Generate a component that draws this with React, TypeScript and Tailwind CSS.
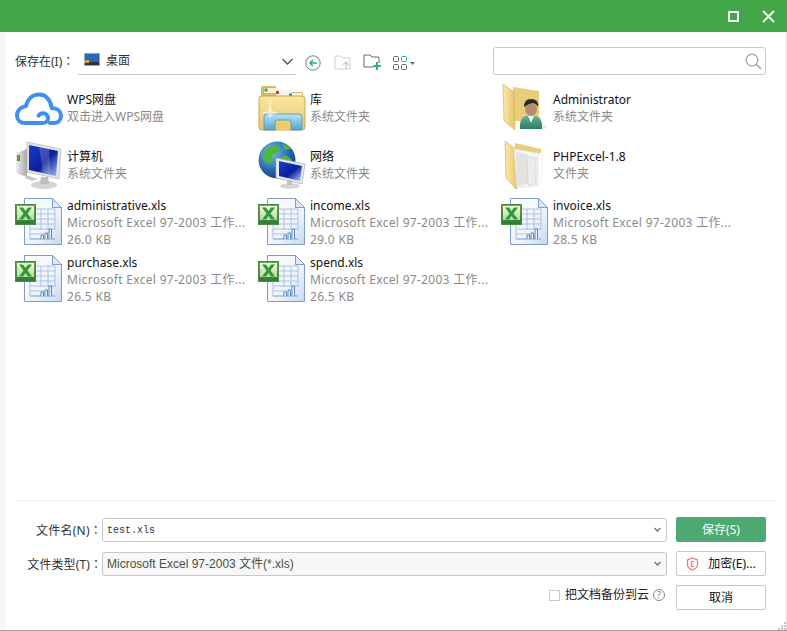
const cjk = "font-['Noto_Sans','Noto_Sans_CJK_SC',sans-serif]";

function CloudIcon() {
  return (
    <svg width="48" height="48" viewBox="0 0 48 48" fill="none">
      <path d="M35 39h4.500c3.600 0 6.500-3 6.500-7 0-4.600-3.400-7.800-8-7.800h-1.200C35.500 15.500 30.500 10.500 24 10.500 17.500 10.500 12.500 15 11 22 6 23 2 26.500 2 31.500c0 4.500 3.500 7.500 8 7.500h17.500c3.500 0 5.500-2.200 5.500-4.800 0-2.800-2.200-5-5-5-2 0-3.500 1-4.500 2.500"
        stroke="#3f8ef5" strokeWidth="4" strokeLinecap="round" strokeLinejoin="round" />
    </svg>
  );
}

function LibraryIcon() {
  return (
    <svg width="48" height="48" viewBox="0 0 48 48" fill="none">
      <defs>
        <linearGradient id="libF" x1="0" y1="0" x2="0" y2="1"><stop offset="0" stopColor="#f8e7a4" /><stop offset="1" stopColor="#e8c768" /></linearGradient>
        <linearGradient id="libB" x1="0" y1="0" x2="0" y2="1"><stop offset="0" stopColor="#bfe3f3" /><stop offset="1" stopColor="#4fa3d3" /></linearGradient>
      </defs>
      <path d="M3 10V3.500q0-1.500 1.500-1.500h12q1.500 0 2 2v2h10l2 2h13q1.500 0 1.500 1.500V14H3z" fill="#d8b95e" />
      <rect x="6" y="4" width="14" height="5" fill="#f4f1e0" /><rect x="6.500" y="4.500" width="3" height="3" fill="#3fa34d" />
      <rect x="18" y="6" width="15" height="6" fill="#f7f5e8" /><rect x="18" y="7" width="3" height="3" fill="#d8382a" />
      <rect x="30" y="9" width="14" height="5" fill="#f7f5e8" /><rect x="31" y="9.500" width="3" height="3" fill="#2a8cd0" />
      <path d="M1 15q0-3 3-3h40q3 0 3 3v28q0 3-3 3H4q-3 0-3-3z" fill="url(#libF)" stroke="#c9a84f" strokeWidth="1" />
      <path d="M6 33q0-3 3-3h32q3 0 3 3v13H33v-8q0-2-2-2H19q-2 0-2 2v8H6z" fill="url(#libB)" stroke="#5c9ec4" />
      <rect x="19" y="38" width="12" height="8" fill="#eccb6c" />
      <path d="M12 15l2 12 7 2-7 2-2 3-2-4-8-1 8-2z" fill="#fff" opacity="0.55" />
    </svg>
  );
}

function AdminIcon() {
  return (
    <svg width="48" height="48" viewBox="0 0 48 48" fill="none">
      <defs>
        <linearGradient id="admF" x1="0" y1="0" x2="1" y2="0"><stop offset="0" stopColor="#fbe9a8" /><stop offset="1" stopColor="#e5c268" /></linearGradient>
        <linearGradient id="admS" x1="0" y1="0" x2="0" y2="1"><stop offset="0" stopColor="#64b294" /><stop offset="1" stopColor="#2c7e62" /></linearGradient>
      </defs>
      <path d="M12 3l26 4v30H12z" fill="#e9cd7c" />
      <path d="M2 0l11 8 1 38L3 37z" fill="url(#admF)" stroke="#d6b65f" strokeWidth="0.7" />
      <ellipse cx="38" cy="43" rx="8" ry="3" fill="#d9d9d9" opacity="0.5" />
      <path d="M19 45v-4q0-7 6-9h10q6 2 6 9v4z" fill="url(#admS)" />
      <path d="M27 32l3 7 3-7z" fill="#eef5f0" />
      <ellipse cx="30" cy="25" rx="6" ry="7" fill="#b98e6d" />
      <path d="M23 23q0-8 7-8 8 0 7 8-2-4-6-4-4 1-8 4z" fill="#2a2a26" />
    </svg>
  );
}

function ComputerIcon() {
  return (
    <svg width="48" height="48" viewBox="0 0 48 48" fill="none">
      <defs>
        <linearGradient id="cmpS" x1="0" y1="0" x2="1" y2="1"><stop offset="0" stopColor="#1a3ed0" /><stop offset="0.55" stopColor="#0a1f9a" /><stop offset="1" stopColor="#a6bdf2" /></linearGradient>
        <linearGradient id="cmpB" x1="0" y1="0" x2="1" y2="0"><stop offset="0" stopColor="#eeeeee" /><stop offset="1" stopColor="#a8a8a8" /></linearGradient>
      </defs>
      <path d="M1 12l11-4v28L3 33q-2-1-2-3z" fill="url(#cmpB)" />
      <rect x="2" y="14" width="3" height="6" fill="#6d8d4a" />
      <path d="M11 34l12 4-6 2-7-3z" fill="#c9c9c9" />
      <path d="M12 1l34 7-2 30-32-7z" fill="#e4e4e4" stroke="#b6b6b6" strokeWidth="0.7" />
      <path d="M14 4l29 6-2 25-27-6z" fill="url(#cmpS)" />
      <path d="M24 6l10 2 2 26-8-2z" fill="#fff" opacity="0.18" />
      <ellipse cx="29" cy="44" rx="13" ry="4" fill="#d4d4d4" />
      <path d="M26 36h7l1 7h-9z" fill="#bdbdbd" />
    </svg>
  );
}

function NetworkIcon() {
  return (
    <svg width="48" height="48" viewBox="0 0 48 48" fill="none">
      <defs>
        <radialGradient id="netG" cx="0.35" cy="0.3" r="0.8"><stop offset="0" stopColor="#7cc0ea" /><stop offset="0.6" stopColor="#2566ad" /><stop offset="1" stopColor="#0f3a70" /></radialGradient>
        <linearGradient id="netS" x1="0" y1="0" x2="1" y2="1"><stop offset="0" stopColor="#1a3ed0" /><stop offset="0.55" stopColor="#0a1f9a" /><stop offset="1" stopColor="#b8ccf5" /></linearGradient>
      </defs>
      <circle cx="19" cy="19" r="18.500" fill="url(#netG)" />
      <path d="M8 8q6-4 11-3l3 3-3 5-5 1 1 6-5 3-5-5q-1-5 3-10zM20 18l8-4 6 5-5 4-1 7-5 3-2-8zM24 3q6 1 9 5l-6 1z" fill="#4fb83c" />
      <path d="M18 17l29 6-3 20-26-6z" fill="#e6e9ee" stroke="#a9afb8" strokeWidth="0.7" />
      <path d="M21 20l23 5-2 15-21-5z" fill="url(#netS)" />
      <ellipse cx="32" cy="45" rx="10" ry="2.800" fill="#d5d5d5" />
      <rect x="29" y="39" width="5" height="5" fill="#c2c2c2" />
    </svg>
  );
}

function FolderDocsIcon() {
  return (
    <svg width="48" height="48" viewBox="0 0 48 48" fill="none">
      <defs>
        <linearGradient id="fldF" x1="0" y1="0" x2="1" y2="0"><stop offset="0" stopColor="#fbe9a8" /><stop offset="1" stopColor="#e8c66c" /></linearGradient>
      </defs>
      <path d="M14 2l26 6v4H14z" fill="#e9cd7c" />
      <path d="M4 0l11 8 1 41L5 37z" fill="url(#fldF)" stroke="#d6b65f" strokeWidth="0.7" />
      <path d="M13 8l24 4v33l-21 1z" fill="#f6f6f4" stroke="#dcdcdc" strokeWidth="0.7" />
      <path d="M15 11l11 2 1 30-11 2z" fill="#e3e3e1" />
      <path d="M26 15l9 2v26l-8 1z" fill="#ececea" stroke="#c8c8c8" strokeWidth="0.5" />
      <path d="M37 12l4 2-1 28-3 2z" fill="#fff" stroke="#e0e0e0" strokeWidth="0.5" />
    </svg>
  );
}

function XlsIcon() {
  return (
    <svg width="48" height="48" viewBox="0 0 48 48" fill="none">
      <defs>
        <linearGradient id="xlsD" x1="0" y1="0" x2="1" y2="1"><stop offset="0" stopColor="#ffffff" /><stop offset="0.6" stopColor="#eef3fb" /><stop offset="1" stopColor="#c6d8f2" /></linearGradient>
        <linearGradient id="xlsG" x1="0" y1="0" x2="0" y2="1"><stop offset="0" stopColor="#f2f8e2" /><stop offset="1" stopColor="#b7d99a" /></linearGradient>
        <linearGradient id="xlsE" x1="0" y1="0" x2="0" y2="1"><stop offset="0" stopColor="#6aa84f" /><stop offset="1" stopColor="#2e7a33" /></linearGradient>
      </defs>
      <path d="M9.500 0.500H37.500L46.500 9.500V46.500H9.500z" fill="url(#xlsD)" stroke="#7f9dc6" />
      <path d="M37.500 0.500V9.500H46.500z" fill="#dfe8f5" stroke="#7f9dc6" />
      <path d="M20 11h20M20 16h20M20 21h20M15 26h25M15 31h25M15 36h14M26 11v21M33 11v21M40 11v21M15 26v15" stroke="#a9c2e3" strokeWidth="1" />
      <path d="M15 41h25" stroke="#7f9dc6" />
      <path d="M30 41v-6h2.500v6M34 41v-10h2.500v10M26 41v-4h2.500v4" stroke="#5d88bd" fill="#e8f0fa" />
      <rect x="0.500" y="6.500" width="20" height="20" fill="url(#xlsE)" stroke="#4f8a45" />
      <rect x="2" y="8" width="17" height="14" fill="url(#xlsG)" />
      <path d="M4 9.500h4l2.500 3.500L13 9.500h4l-4.500 6 4.500 6h-4L10.500 18 8 21.500H4l4.500-6z" fill="#2f9a3c" />
    </svg>
  );
}

const files = [
  { icon: <CloudIcon />, name: "WPS网盘", lines: ["双击进入WPS网盘"] },
  { icon: <LibraryIcon />, name: "库", lines: ["系统文件夹"] },
  { icon: <AdminIcon />, name: "Administrator", lines: ["系统文件夹"] },
  { icon: <ComputerIcon />, name: "计算机", lines: ["系统文件夹"] },
  { icon: <NetworkIcon />, name: "网络", lines: ["系统文件夹"] },
  { icon: <FolderDocsIcon />, name: "PHPExcel-1.8", lines: ["文件夹"] },
  { icon: <XlsIcon />, name: "administrative.xls", lines: ["Microsoft Excel 97-2003 工作...", "26.0 KB"] },
  { icon: <XlsIcon />, name: "income.xls", lines: ["Microsoft Excel 97-2003 工作...", "29.0 KB"] },
  { icon: <XlsIcon />, name: "invoice.xls", lines: ["Microsoft Excel 97-2003 工作...", "28.5 KB"] },
  { icon: <XlsIcon />, name: "purchase.xls", lines: ["Microsoft Excel 97-2003 工作...", "26.5 KB"] },
  { icon: <XlsIcon />, name: "spend.xls", lines: ["Microsoft Excel 97-2003 工作...", "26.5 KB"] },
];

function Caret() {
  return (
    <svg width="7" height="6" viewBox="0 0 7 6" fill="none">
      <path d="M0.500 1l3 3 3-3" stroke="#777" strokeWidth="1.500" />
    </svg>
  );
}

function Colon() {
  return <span className="font-['Noto_Sans_CJK_TC',sans-serif]">：</span>;
}

export default function App() {
  return (
    <div className={`w-[787px] h-[631px] flex flex-col bg-white overflow-hidden border-b border-b-[#a0a0a0] ${cjk}`}>
      {/* title bar */}
      <div className="h-8 shrink-0 bg-[#42a648] flex items-center justify-end pr-[12px] gap-[23px]">
        <div className="w-[11px] h-[11px] border-2 border-white" />
        <svg width="13" height="13" viewBox="0 0 13 13" fill="none">
          <path d="M1 1l11 11M12 1L1 12" stroke="#fff" strokeWidth="1.800" />
        </svg>
      </div>

      <div className="flex-1 flex flex-col border-l-[6px] border-l-[#f5f8f6] border-r border-r-[#e0e0e0] relative">
        {/* toolbar */}
        <div className="h-[28px] mt-[15px] flex items-center pl-[9px] pr-[20px]">
          <span className="text-[12px] text-[#333] w-[63px] shrink-0 mt-[1px] whitespace-nowrap">保存在(I)<Colon /></span>
          <div className="w-[218px] h-[28px] border-b border-b-[#c8c8c8] flex items-center pl-[6px]">
            <svg width="16" height="13" viewBox="0 0 16 13" className="shrink-0 mb-[3px]">
              <rect width="16" height="13" fill="#8fa6c4" />
              <rect x="1" y="1" width="14" height="8" fill="#2a66b8" />
              <rect x="1" y="9" width="14" height="3" fill="#333" />
              <rect x="1" y="7" width="4" height="3" fill="#d9a23c" />
            </svg>
            <span className="ml-[6px] text-[12px] text-[#333] mt-[1px]">桌面</span>
            <svg width="11" height="7" viewBox="0 0 11 7" fill="none" className="ml-auto mr-[3px] mt-[1px]">
              <path d="M0.500 1l5 5 5-5" stroke="#555" strokeWidth="1.300" />
            </svg>
          </div>
          <svg width="16" height="16" viewBox="0 0 16 16" fill="none" className="ml-[9px] shrink-0 mt-[3px]">
            <circle cx="8" cy="8" r="7.200" stroke="#777" />
            <path d="M12 8H5M8 5L5 8l3 3" stroke="#2bb673" strokeWidth="1.600" />
          </svg>
          <svg width="18" height="15" viewBox="0 0 18 15" fill="none" className="ml-[13px] shrink-0 mt-[3px]">
            <path d="M1 14V1h6l2 2h7v11H1z" stroke="#cfcfcf" />
            <path d="M12 14V8M9 10l3-3 3 3" stroke="#cfcfcf" strokeWidth="1.500" />
          </svg>
          <svg width="18" height="16" viewBox="0 0 18 16" fill="none" className="ml-[11px] shrink-0 mt-[2px]">
            <path d="M10 13H1V1h6l2 2h7v6" stroke="#666" />
            <path d="M14 8v8M10 12h8" stroke="#2bb673" strokeWidth="2" />
          </svg>
          <svg width="14" height="14" viewBox="0 0 14 14" fill="none" className="ml-[12px] shrink-0 mt-[3px]">
            <rect x="0.500" y="0.500" width="5" height="5" rx="1" stroke="#666" />
            <rect x="8.500" y="0.500" width="5" height="5" rx="1" stroke="#2bb673" />
            <rect x="0.500" y="8.500" width="5" height="5" rx="1" stroke="#666" />
            <rect x="8.500" y="8.500" width="5" height="5" rx="1" stroke="#666" />
          </svg>
          <svg width="5" height="3" viewBox="0 0 5 3" className="ml-[3px] shrink-0 mt-[4px]">
            <path d="M0 0h5L2.500 3z" fill="#666" />
          </svg>
          <div className="ml-auto w-[273px] h-[28px] border border-[#c8c8c8] rounded-[3px] flex items-center justify-end pr-[3px]">
            <svg width="17" height="17" viewBox="0 0 17 17" fill="none">
              <circle cx="7" cy="7" r="5.800" stroke="#a0a0a0" strokeWidth="1.200" />
              <path d="M11 11l5 5" stroke="#a0a0a0" strokeWidth="1.400" />
            </svg>
          </div>
        </div>

        {/* file list */}
        <div className="grid grid-cols-[243px_243px_243px] auto-rows-[57px] pl-[9px] mt-[4px] h-[421px] content-start">
          {files.map((f) => (
            <div key={f.name} className="flex items-center gap-[4px]">
              <div className="w-[48px] h-[48px] shrink-0">{f.icon}</div>
              <div className={`min-w-0 text-[12px] leading-[17px] whitespace-nowrap ${f.lines.length > 1 ? "pt-[2px]" : ""}`}>
                <div className="text-[#111]">{f.name}</div>
                {f.lines.map((l) => (
                  <div key={l} className={`text-[#8a8a8a] ${f.lines.length > 1 ? "tracking-[0.3px]" : ""}`}>{l}</div>
                ))}
              </div>
            </div>
          ))}
        </div>

        {/* form */}
        <div className="mx-[10px] border-t border-t-[#eeeeee] pt-[17px] pr-[10px] flex gap-[9px]">
          <div className="flex-1 flex flex-col gap-[10px]">
            <div className="flex items-center h-[24px]">
              <span className="w-[86px] text-right text-[12px] text-[#333] shrink-0 tracking-[0.25px]">文件名(N)<Colon /></span>
              <div className="flex-1 h-[24px] border border-[#c8c8c8] rounded-[3px] flex items-center pl-[4px] pr-[5px]">
                <span className="font-['Liberation_Mono',monospace] text-[10px] text-[#333]">test.xls</span>
                <span className="ml-auto"><Caret /></span>
              </div>
            </div>
            <div className="flex items-center h-[24px]">
              <span className="w-[86px] text-right text-[12px] text-[#333] shrink-0 tracking-[0.1px]">文件类型(T)<Colon /></span>
              <div className="flex-1 h-[24px] border border-[#c8c8c8] rounded-[3px] bg-[#f7f7f7] flex items-center pl-[4px] pr-[5px]">
                <span className="font-['Liberation_Sans','Noto_Sans_CJK_SC',sans-serif] text-[12px] text-[#4a4f3f]">Microsoft Excel 97-2003 文件(*.xls)</span>
                <span className="ml-auto"><Caret /></span>
              </div>
            </div>
            <div className="flex items-center justify-end gap-[4px] text-[12px] text-[#222] pr-[2px]">
              <span className="w-[11px] h-[11px] border border-[#c8c8c8] mr-[1px]" />
              <span>把文档备份到云</span>
              <span className="w-[12px] h-[12px] rounded-full border border-[#888] text-[9px] leading-[10px] text-center text-[#777]">?</span>
            </div>
          </div>
          <div className="w-[90px] flex flex-col gap-[9px] shrink-0 -mt-[1px]">
            <button className="h-[25px] rounded-[2px] bg-[#4ea872] text-white text-[12px]">保存(S)</button>
            <button className="h-[25px] rounded-[2px] border border-[#c8c8c8] text-[12px] text-[#111] flex items-center justify-center gap-[9px]">
              <svg width="13" height="14" viewBox="0 0 13 14" fill="none">
                <path d="M6.500 1l5 2v5q0 3-5 5-5-2-5-5V3z" stroke="#f0776c" strokeWidth="1.200" />
                <path d="M8 4.500H5.200v5H8M5.200 7H7.500" stroke="#f0776c" />
              </svg>
              加密(E)...
            </button>
            <button className="h-[25px] rounded-[2px] border border-[#c8c8c8] text-[12px] text-[#111]">取消</button>
          </div>
        </div>

        {/* resize grip */}
        <svg width="8" height="8" viewBox="0 0 8 8" className="absolute right-0 bottom-0">
          <path d="M6 0h2v2H6zM3 3h2v2H3zM6 3h2v2H6zM0 6h2v2H0zM3 6h2v2H3zM6 6h2v2H6z" fill="#c4c4c4" />
        </svg>
      </div>
    </div>
  );
}
